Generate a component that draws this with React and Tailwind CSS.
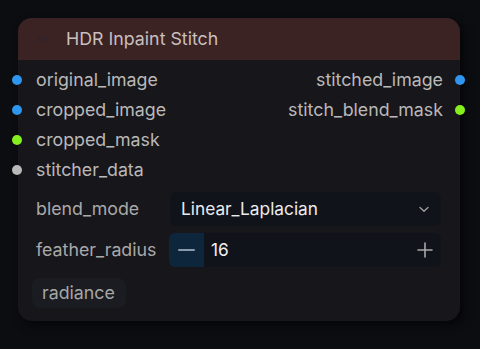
import React from "react";

const Dot = ({ color, side }) => (
  <span
    className={`block w-[10px] h-[10px] rounded-full shrink-0 ${side === "l" ? "-ml-[6px]" : "-mr-[5px]"}`}
    style={{ backgroundColor: color }}
  />
);

export default function App() {
  const blue = "#2f96ef";
  const green = "#86f01e";
  const gray = "#b9b9b9";
  return (
    <div
      className="w-[480px] h-[349px] bg-[#0c0d11] pt-[18px] pl-[18px]"
      style={{ fontFamily: "Inter, 'Noto Sans', sans-serif" }}
    >
      <div className="w-[442px] h-[303px] rounded-[14px] bg-[#17161a] flex flex-col shadow-[4px_4px_10px_rgba(0,0,0,0.6)]">
        <div className="h-[42px] rounded-t-[14px] bg-[#3c2323] flex items-center pl-[18px]">
          <svg width="12" height="12" viewBox="0 0 12 12" className="shrink-0">
            <path d="M2.5 4.5 L6 8 L9.5 4.5" fill="none" stroke="#2b2431" strokeWidth="1.6" strokeLinecap="round" strokeLinejoin="round" />
          </svg>
          <span className="ml-[18px] text-[17.8px] text-[#c9bfbf] leading-none">HDR Inpaint Stitch</span>
        </div>
        <div className="flex flex-col pt-[5px]">
          {[
            ["original_image", blue, "stitched_image", blue],
            ["cropped_image", blue, "stitch_blend_mask", green],
            ["cropped_mask", green, null, null],
            ["stitcher_data", gray, null, null],
          ].map(([l, lc, r, rc]) => (
            <div key={l} className="h-[30px] flex items-center justify-between">
              <div className="flex items-center gap-[14px]">
                <Dot color={lc} side="l" />
                <span className="text-[17.8px] text-[#b9b9b9] leading-none">{l}</span>
              </div>
              {r && (
                <div className="flex items-center gap-[12px]">
                  <span className="text-[17.8px] text-[#b9b9b9] leading-none">{r}</span>
                  <Dot color={rc} side="r" />
                </div>
              )}
            </div>
          ))}
        </div>
        <div className="flex flex-col gap-[7px] pt-[7px] pl-[18px] pr-[19px]">
          <div className="h-[34px] flex items-center">
            <span className="w-[134px] text-[17.8px] text-[#a9a9a9] leading-none">blend_mode</span>
            <div className="flex-1 h-full rounded-[6px] bg-[#10131a] flex items-center justify-between pl-[11px] pr-[11px]">
              <span className="text-[17.3px] text-[#ececec] leading-none">Linear_Laplacian</span>
              <svg width="12" height="12" viewBox="0 0 12 12">
                <path d="M2 4.5 L6 8.2 L10 4.5" fill="none" stroke="#a0a0a0" strokeWidth="1.3" strokeLinecap="round" strokeLinejoin="round" />
              </svg>
            </div>
          </div>
          <div className="h-[34px] flex items-center">
            <span className="w-[133px] text-[17.8px] text-[#a9a9a9] leading-none whitespace-nowrap">feather_radius</span>
            <div className="flex-1 h-full rounded-[6px] bg-[#10131a] flex items-center">
              <div className="w-[35px] h-full rounded-l-[6px] bg-[#0e263b] flex items-center justify-center">
                <span className="block w-[17px] h-[2px] bg-[#8a9aa8] rounded" />
              </div>
              <span className="ml-[7px] text-[17.3px] text-[#f0f0f0] leading-none">16</span>
              <svg width="16" height="16" viewBox="0 0 16 16" className="ml-auto mr-[8px]">
                <path d="M8 1 V15 M1 8 H15" stroke="#a8a8a8" strokeWidth="1.6" strokeLinecap="round" />
              </svg>
            </div>
          </div>
        </div>
        <div className="pl-[14px] pt-[11px]">
          <div className="w-[94px] h-[30px] rounded-[8px] bg-[#1a1c21] flex items-center pl-[10px]">
            <span className="text-[17.8px] text-[#a6a6a6] leading-none">radiance</span>
          </div>
        </div>
      </div>
    </div>
  );
}
